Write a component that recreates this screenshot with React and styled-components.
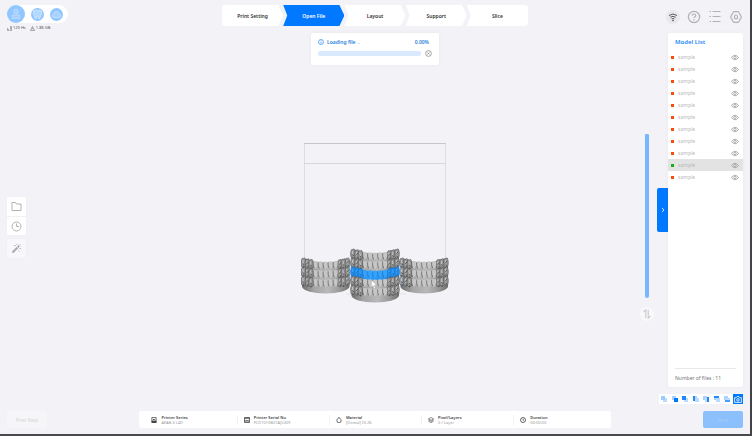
import React, { useState } from 'react';
import styled, { createGlobalStyle } from 'styled-components';

const steps = ['Print Setting', 'Open File', 'Layout', 'Support', 'Slice'];
const models = Array.from({ length: 11 }, (_, i) => ({ id: i, name: 'sample' }));
const SELECTED = 9;

const printInfo = [
    { icon: 'printer', label: 'Printer Series', value: 'AFAB-S L4D' },
    { icon: 'serial', label: 'Printer Serial No', value: 'FCD1015B01AJL009' },
    { icon: 'drop', label: 'Material', value: '[Dental] DL26' },
    { icon: 'layers', label: 'Pixel/Layers', value: '0 / Layer' },
    { icon: 'clock', label: 'Duration', value: '00:00:00' },
];

// which part of the cube is highlighted for each camera preset
const views = [
    { name: 'Perspective', x: 0, y: 0, w: 4, h: 4, fill: '#9ccbff' },
    { name: 'Front', x: 2, y: 2, w: 4, h: 4, fill: '#0078ff' },
    { name: 'Back', x: 0, y: 0, w: 4, h: 4, fill: '#2389fb' },
    { name: 'Left', x: 0, y: 0, w: 2, h: 5, fill: '#2389fb' },
    { name: 'Right', x: 4, y: 1, w: 2, h: 5, fill: '#2389fb' },
    { name: 'Top', x: 0, y: 0, w: 5, h: 2, fill: '#2389fb' },
    { name: 'Bottom', x: 1, y: 4, w: 5, h: 2, fill: '#4a9dfb' },
];

const Eye = () => (
    <svg width="8" height="7" viewBox="0 0 8 7" fill="none" stroke="#9d9da1" strokeWidth=".8">
        <path d="M.4 3.500Q4-1 7.600 3.500Q4 8 .4 3.500Z" />
        <circle cx="4" cy="3.500" r="1.200" />
    </svg>
)

const InfoIcon = ({ type }) => (
    <svg width="6" height="6" viewBox="0 0 6 6" fill="none" stroke="#444" strokeWidth=".8">
        {type === 'printer' && <><path d="M.9.4h4.200v5.200H.9z" /><path d="M1 4h4v1.500H1zM2 2l1 1 1-1" fill="#444" /></>}
        {type === 'serial' && <><path d="M.5.500h5v5h-5zM.5 1.300h5" /><path d="M1.800 5V3.200L3 4l1.200-.8V5" /></>}
        {type === 'drop' && <path d="M3 .4C4.600 1.700 5.200 2.700 5.100 3.700a2.100 2.100 0 0 1-4.200 0C.8 2.700 1.400 1.700 3 .4Z" />}
        {type === 'layers' && <path d="m3 .5 2.600 1.400L3 3.300.4 1.900ZM.4 3 3 4.400 5.600 3M.4 4.200 3 5.600l2.600-1.400" strokeWidth=".6" />}
        {type === 'clock' && <><circle cx="3" cy="3" r="2.500" /><path d="M3 1.700V3l.8.6" /></>}
    </svg>
)

// one dental arch seen from the front: molars crowd at both ends, incisors dip in the middle
const Arch = ({ x, y, selected }) => {
    const base = selected ? 'url(#blueArch)' : 'url(#greyArch)';
    const light = selected ? '#36a2fa' : '#c6c6c6';
    const mid = selected ? '#2690ee' : '#969696';
    const dark = selected ? '#1673c8' : '#565656';
    const dip = (v) => 3 * (1 - ((v - 24) / 24) ** 2);
    const incisors = [14, 19, 24, 29, 34];
    const molars = [2, 6, 9.5, 38.5, 42, 46];
    return (
        <g transform={`translate(${x} ${y})`}>
            <path d="M.5 4Q3 0 8 3Q24 8 40 3Q45 0 48 4L48 12Q44 18 24 18.500Q4 18 .5 12Z" fill={base} />
            {molars.map((m, i) => (
                <g key={m} transform={`translate(${m} ${dip(m)})`}>
                    <path d="M-2 9Q-3 4-1.700 1.500Q-1 0-.2 1.200Q.8-.8 1.700 1.300Q2.900 4.500 1.900 9Q0 11-2 9Z" fill={mid} stroke={dark} strokeWidth=".6" />
                    <path d="M-.8 2.500q1 2 .3 4" stroke={light} strokeWidth="1" fill="none" />
                    <path d={i % 2 ? 'M1 3.500-1 6M.8 7.500l-.8 2.500' : 'M-.8 6 1 7.500M0 8.500v2'} stroke={dark} strokeWidth=".9" />
                </g>
            ))}
            {incisors.map((t) => (
                <g key={t} transform={`translate(${t} ${dip(t)})`}>
                    <path d="M-2.200 2Q0 1 2.200 2Q2.600 6 1 8.500Q0 10-1 8.500Q-2.600 6-2.200 2Z" fill={light} />
                    <path d="M-2.400 2.500Q-2.700 6-1.300 8.500" stroke={dark} strokeOpacity=".75" strokeWidth=".8" fill="none" />
                </g>
            ))}
        </g>
    )
}

const Scene = () => (
    <svg width="148" height="160" viewBox="0 0 148 160" role="img" aria-label="Build volume with dental models">
        <defs>
            <linearGradient id="greyArch">
                <stop offset="0" stopColor="#6e6e6e" />
                <stop offset=".25" stopColor="#a4a4a4" />
                <stop offset=".55" stopColor="#b8b8b8" />
                <stop offset=".8" stopColor="#999" />
                <stop offset="1" stopColor="#6e6e6e" />
            </linearGradient>
            <linearGradient id="blueArch">
                <stop offset="0" stopColor="#2482d4" />
                <stop offset=".4" stopColor="#2f9dfa" />
                <stop offset="1" stopColor="#2482d4" />
            </linearGradient>
        </defs>
        <path d="M3.500 0v130M144.500 0v130" stroke="#dcdce1" />
        <path d="M3 20.500h142" stroke="#d5d5db" />
        <path d="M3 .5h142" stroke="#c6c6cc" />
        <path d="M45 151h60" stroke="#e0e0e5" />
        {[114, 123, 132].map((y) => <Arch key={y} x={.5} y={y} />)}
        {[114, 123, 132].map((y) => <Arch key={y} x={99} y={y} />)}
        <path d="M49 121v16M99 121v20" stroke="#80c2fb" strokeDasharray="2 1" />
        {[105, 114, 123, 132, 141].map((y) => <Arch key={y} x={50} y={y} selected={y === 123} />)}
        <path d="M70.500 137 75.500 142l-2.300.2 1.200 2.800-1.300.5-1.200-2.800-1.600 1.500Z" fill="#fff" stroke="#8a8a8a" strokeWidth=".3" />
    </svg>
)

const App = () => {
    const [level, setLevel] = useState(100);

    return (
        <>
        <GlobalStyle />
        <Shell>
            <Header>
                <Account>
                    <AvatarPill>
                        <Avatar $size={18} aria-label="Account">
                            <svg width="18" height="18" viewBox="0 0 18 18" fill="#a5d0ff" stroke="#c4e0ff" strokeWidth=".8">
                                <circle cx="9" cy="6.500" r="2.300" />
                                <path d="M5.300 10h7.400v3.500H5.300z" />
                            </svg>
                        </Avatar>
                        <Avatar $size={13} aria-label="Dental">
                            <svg width="13" height="13" viewBox="0 0 13 13" fill="#b4d8ff" stroke="#d5e9ff" strokeWidth=".8">
                                <path d="M2.600 3Q4.500 1.300 6.500 2.800Q8.500 1.300 10.400 3q.8 2.700-.8 4.800-.4 3.200-1.500 3.200-.7 0-.9-2.700H5.800Q5.600 11 4.900 11 3.800 11 3.400 7.800 1.800 5.700 2.600 3Z" />
                            </svg>
                        </Avatar>
                        <Avatar $size={13} aria-label="Cloud">
                            <svg width="13" height="13" viewBox="0 0 13 13" fill="#a5d0ff" stroke="#cde5ff" strokeWidth=".8">
                                <path d="M4 9.500Q2.200 9.300 2.300 7.500 2.500 6 4 5.800 4.500 3.500 6.600 3.500 8.600 3.600 9 5.700q1.700.2 1.700 1.900T9 9.500Z" />
                            </svg>
                        </Avatar>
                    </AvatarPill>
                    <Usage>
                        <span>
                            <svg width="5" height="5" viewBox="0 0 5 5" fill="none" stroke="#777" strokeWidth=".6"><path d="M.5 2v2.500h1V3M2.500 4.500h2V.5h-1v3" /></svg>
                            123 Hs
                        </span>
                        <span>
                            <svg width="5" height="5" viewBox="0 0 5 5" fill="none" stroke="#777" strokeWidth=".6"><path d="M.5 4.500h4L3.500 2.500 2.500.5l-1 2ZM1.500 2.700h2" /></svg>
                            1.86 GB
                        </span>
                    </Usage>
                </Account>

                <Steps>
                    {steps.map((s) => <Step key={s} $active={s === 'Open File'}>{s}</Step>)}
                </Steps>

                <HeaderTools>
                    <IconButton $round aria-label="Network">
                        <svg width="10" height="10" viewBox="0 0 10 10" fill="none" stroke="#48484c" strokeWidth=".9">
                            <path d="M1 3.500Q5 .5 9 3.500M2.300 5.300Q5 3.300 7.700 5.300M3.600 7Q5 5.900 6.400 7" />
                            <circle cx="5" cy="8.600" r=".4" fill="#48484c" />
                        </svg>
                    </IconButton>
                    <IconButton aria-label="Help">
                        <svg width="14" height="14" viewBox="0 0 14 14" fill="none" stroke="#b2b2b6" strokeWidth="1.200">
                            <circle cx="7" cy="7" r="5.600" />
                            <path d="M5.200 5.700Q5.300 4 7 4t1.800 1.600Q8.800 6.500 7.700 7 7 7.400 7 8.300M7 9.300v1.200" />
                        </svg>
                    </IconButton>
                    <IconButton aria-label="Menu">
                        <svg width="14" height="14" viewBox="0 0 14 14" stroke="#b2b2b6" strokeWidth="1">
                            <path d="M1.500 1.500h1.500M4.500 1.500h8M1.500 6.500h1.500M4.500 6.500h8M1.500 11.500h1.500M4.500 11.500h8" />
                        </svg>
                    </IconButton>
                    <IconButton aria-label="Settings">
                        <svg width="14" height="14" viewBox="0 0 14 14" fill="none" stroke="#b2b2b6" strokeWidth="1.200">
                            <path d="M4.300 2.200Q4.600 1.600 5.200 1.600h3.600q.6 0 .9.6L12.200 6.500q.3.5 0 1L9.700 11.800q-.3.6-.9.6H5.200q-.6 0-.9-.6L1.800 7.500q-.3-.5 0-1Z" />
                            <ellipse cx="7" cy="7" rx="1.600" ry="2" />
                        </svg>
                    </IconButton>
                </HeaderTools>
            </Header>

            <Body>
                <Rail>
                    <RailCard>
                        <RailButton aria-label="Open folder">
                            <svg width="11" height="11" viewBox="0 0 11 11" fill="none" stroke="#b2b2b6" strokeWidth="1">
                                <path d="M1 1.500h3.500l1 1.500H10v6.500H1z" strokeLinejoin="round" />
                            </svg>
                        </RailButton>
                        <RailButton aria-label="Recent files">
                            <svg width="11" height="11" viewBox="0 0 11 11" fill="none" stroke="#b2b2b6" strokeWidth="1">
                                <circle cx="5.500" cy="5.500" r="4.500" />
                                <path d="M5.500 2.500v3h2.700" />
                            </svg>
                        </RailButton>
                    </RailCard>
                    <RailCard $faded>
                        <RailButton aria-label="Auto fix">
                            <svg width="11" height="11" viewBox="0 0 11 11" fill="none" stroke="#aaaaae">
                                <path d="M1.500 9.500 6.500 4.500" strokeWidth="2" />
                                <path d="m7 4 1-1" strokeWidth="1.800" stroke="#8e8e92" />
                                <path d="M3 2.500h1.500M6 1v1M9 1.500v1M8.500 5.500h1.300M7.500 7.500l1 1" strokeWidth=".9" />
                            </svg>
                        </RailButton>
                    </RailCard>
                </Rail>

                <Stage>
                    <Toast>
                        <ToastTitle>
                            <svg width="6" height="6" viewBox="0 0 6 6" fill="none" stroke="#2b8cf0" strokeWidth=".7">
                                <circle cx="3" cy="3" r="2.500" /><path d="M3 1.400v.7M3 2.600v2" />
                            </svg>
                            <label htmlFor="loading">Loading file &nbsp;.</label>
                            <Percent>0.00%</Percent>
                        </ToastTitle>
                        <ToastRow>
                            <Bar id="loading" value="0" max="100" />
                            <Cancel aria-label="Cancel">
                                <svg width="7" height="7" viewBox="0 0 7 7" fill="none" stroke="#808084" strokeWidth=".7">
                                    <circle cx="3.500" cy="3.500" r="2.900" /><path d="m2.400 2.400 2.200 2.200M4.600 2.400 2.400 4.600" />
                                </svg>
                            </Cancel>
                        </ToastRow>
                    </Toast>
                    <Scene />
                </Stage>

                <Side>
                    <LevelColumn>
                        <Level type="range" aria-label="Slice height" value={level} onChange={(e) => setLevel(e.target.value)} />
                        <Swap aria-label="Flip range">
                            <svg width="8" height="10" viewBox="0 0 8 10" fill="none" stroke="#c9c9cd" strokeWidth="1.100">
                                <path d="M.6 3 2.800.8v8.400M5.200.8v8.400L7.400 7" />
                            </svg>
                        </Swap>
                    </LevelColumn>
                    <PanelColumn>
                        <PanelRow>
                            <Collapse aria-label="Collapse model list">
                                <svg width="4" height="6" viewBox="0 0 4 6" fill="none" stroke="#fff" strokeWidth=".8"><path d="m1 1 2 2-2 2" /></svg>
                            </Collapse>
                            <Panel>
                                <PanelTitle>Model List</PanelTitle>
                                <ModelList>
                                    {models.map((m) => (
                                        <ModelRow key={m.id} $selected={m.id === SELECTED}>
                                            <Dot $selected={m.id === SELECTED} />
                                            <ModelName>{m.name}</ModelName>
                                            <EyeButton aria-label={`Show ${m.name}`}><Eye /></EyeButton>
                                        </ModelRow>
                                    ))}
                                </ModelList>
                                <PanelFoot>Number of files : {models.length}</PanelFoot>
                            </Panel>
                        </PanelRow>
                        <ViewBar>
                            {views.map((v) => (
                                <ViewButton key={v.name} aria-label={v.name}>
                                    <svg width="6" height="6" viewBox="0 0 6 6">
                                        <path d="M0 0h4v4H0z" fill="#a9d2ff" />
                                        <path d="M2 2h4v4H2z" fill="#b9dbff" />
                                        <rect x={v.x} y={v.y} width={v.w} height={v.h} fill={v.fill} />
                                    </svg>
                                </ViewButton>
                            ))}
                            <ViewButton $active aria-label="Screenshot">
                                <svg width="8" height="7" viewBox="0 0 8 7" fill="none" stroke="#fff" strokeWidth=".8">
                                    <path d="M.6 1.700h1.700L3 .6h2l.7 1.100h1.700v4.700H.6z" /><circle cx="4" cy="3.900" r="1.300" />
                                </svg>
                            </ViewButton>
                        </ViewBar>
                    </PanelColumn>
                </Side>
            </Body>

            <Footer>
                <FooterButton>Prev Step</FooterButton>
                <InfoBar>
                    {printInfo.map((p) => (
                        <InfoItem key={p.label}>
                            <InfoIcon type={p.icon} />
                            <div>
                                <InfoLabel>{p.label}</InfoLabel>
                                <InfoValue>{p.value}</InfoValue>
                            </div>
                        </InfoItem>
                    ))}
                </InfoBar>
                <FooterButton $primary>Next</FooterButton>
            </Footer>
        </Shell>
        </>
    )
}

const GlobalStyle = createGlobalStyle`
  * { box-sizing: border-box; }
  body {
    margin: 0;
    background: #f2f2f7;
    font-family: "Noto Sans", "Open Sans", sans-serif;
    font-size: 5px;
    line-height: 6px;
    color: #333;
  }
  button {
    display: flex;
    align-items: center;
    justify-content: center;
    padding: 0;
    border: 0;
    background: none;
    font: inherit;
    color: inherit;
  }
  svg { display: block; flex: none; }
`

const Shell = styled.div`
  min-height: 100vh;
  display: flex;
  flex-direction: column;
  padding: 5px 7px 6px;
  border-right: 2px solid #444446;
  border-bottom: 2px solid #4a4a4a;
`

const Header = styled.header`
  display: grid;
  grid-template-columns: 1fr auto 1fr;
  align-items: start;
  height: 28px;
`

const Account = styled.div`
  display: flex;
  flex-direction: column;
  align-items: flex-start;
  gap: 2px;
`

const AvatarPill = styled.div`
  display: flex;
  align-items: center;
  gap: 6px;
  padding-right: 5px;
  border-radius: 9px;
  background: #fff;
`

const Avatar = styled.button`
  width: ${(p) => p.$size}px;
  height: ${(p) => p.$size}px;
  border-radius: 50%;
  background: #92c6ff;
`

const Usage = styled.div`
  display: flex;
  gap: 4px;
  font-size: 4px;
  color: #555;

  span {
    display: flex;
    align-items: center;
    gap: 1px;
  }
`

const Steps = styled.nav`
  display: flex;
  width: 306px;
  border-radius: 3px;
  overflow: hidden;
`

const Step = styled.button`
  flex: 1;
  height: 21px;
  font-size: 5px;
  font-weight: 600;
  color: ${(p) => (p.$active ? '#fff' : '#333')};
  background: ${(p) => (p.$active ? '#0078ff' : '#fff')};
  clip-path: polygon(0 0, calc(100% - 5px) 0, 100% 50%, calc(100% - 5px) 100%, 0 100%, 4px 50%);

  &:first-child {
    clip-path: polygon(0 0, calc(100% - 5px) 0, 100% 50%, calc(100% - 5px) 100%, 0 100%);
  }
  &:last-child {
    clip-path: polygon(0 0, 100% 0, 100% 100%, 0 100%, 4px 50%);
  }
`

const HeaderTools = styled.div`
  display: flex;
  justify-content: flex-end;
  gap: 7px;
  padding-top: 5px;
`

const IconButton = styled.button`
  width: 14px;
  height: 14px;
  border-radius: 50%;
  background: ${(p) => (p.$round ? '#e9e9ed' : 'none')};
`

const Body = styled.main`
  flex: 1;
  display: grid;
  grid-template-columns: 1fr auto 1fr;
`

const Rail = styled.div`
  display: flex;
  flex-direction: column;
  justify-content: center;
  align-items: flex-start;
  gap: 4px;
  padding-top: 18px;
`

const RailCard = styled.div`
  width: 19px;
  border-radius: 2px;
  background: ${(p) => (p.$faded ? '#f8f8fb' : '#fff')};
  box-shadow: 0 0 3px rgba(0, 0, 0, 0.03);
`

const RailButton = styled.button`
  width: 100%;
  height: 19px;

  & + & {
    border-top: 1px solid #f1f1f3;
  }
`

const Stage = styled.section`
  display: flex;
  flex-direction: column;
  align-items: center;
  gap: 78px;
`

const Toast = styled.div`
  width: 128px;
  height: 32px;
  padding: 6px 7px;
  border-radius: 2px;
  background: #fff;
  box-shadow: 0 0 4px rgba(0, 0, 0, 0.05);
`

const ToastTitle = styled.div`
  display: flex;
  align-items: center;
  gap: 3px;
  font-weight: 600;
  color: #2b83dc;
`

const Percent = styled.span`
  margin-left: auto;
  padding-right: 3px;
`

const ToastRow = styled.div`
  display: flex;
  align-items: center;
  gap: 4px;
  margin-top: 5px;
`

const Bar = styled.progress`
  appearance: none;
  flex: 1;
  min-width: 0;
  height: 5px;
  border: 0;
  border-radius: 2px;
  overflow: hidden;
  background: #d9eaff;

  &::-webkit-progress-bar { background: #d9eaff; }
  &::-webkit-progress-value { background: #0078ff; }
`

const Cancel = styled.button`
  width: 7px;
  height: 7px;
`

const Side = styled.div`
  display: flex;
  justify-content: flex-end;
  gap: 3px;
`

const LevelColumn = styled.div`
  display: flex;
  flex-direction: column;
  align-items: center;
  justify-content: center;
  gap: 9px;
  width: 14px;
  padding-top: 18px;
`

const Level = styled.input`
  appearance: none;
  writing-mode: vertical-lr;
  direction: rtl;
  width: 4px;
  height: 164px;
  margin: 0;
  border-radius: 2px;
  background: #75b6ff;

  &::-webkit-slider-thumb {
    appearance: none;
    width: 4px;
    height: 4px;
    border-radius: 2px;
    background: #75b6ff;
  }
`

const Swap = styled.button`
  width: 14px;
  height: 14px;
  border-radius: 50%;
  background: #f9f9fb;
`

const PanelColumn = styled.div`
  display: flex;
  flex-direction: column;
  align-items: flex-end;
  gap: 7px;
`

const PanelRow = styled.div`
  flex: 1;
  display: flex;
  align-items: center;
`

const Collapse = styled.button`
  width: 11px;
  height: 44px;
  border-radius: 2px 0 0 2px;
  background: #0078ff;
`

const Panel = styled.aside`
  align-self: stretch;
  display: flex;
  flex-direction: column;
  width: 75px;
  border-radius: 2px;
  background: #fff;
  box-shadow: 0 0 4px rgba(0, 0, 0, 0.04);
`

const PanelTitle = styled.h2`
  margin: 0;
  padding: 4px 7px;
  font-size: 6px;
  line-height: 10px;
  font-weight: 600;
  color: #2389f5;
`

const ModelList = styled.ul`
  flex: 1;
  margin: 0;
  padding: 0;
  list-style: none;
`

const ModelRow = styled.li`
  display: flex;
  align-items: center;
  height: 12px;
  padding: 0 4px 0 3px;
  background: ${(p) => (p.$selected ? '#e3e3e3' : 'none')};
`

const Dot = styled.span`
  width: 3px;
  height: 3px;
  margin-right: 4px;
  background: ${(p) => (p.$selected ? '#12b012' : '#ff4a0a')};
`

const ModelName = styled.span`
  flex: 1;
  color: #b9b9bd;
`

const EyeButton = styled.button`
  width: 8px;
  height: 8px;
`

const PanelFoot = styled.p`
  margin: 0 7px;
  padding: 6px 0;
  border-top: 1px solid #e9e9ec;
  color: #77777a;
`

const ViewBar = styled.div`
  display: flex;
  width: 84px;
  height: 10px;
  background: #fff;
`

const ViewButton = styled.button`
  flex: 1;
  background: ${(p) => (p.$active ? '#0078ff' : 'none')};
`

const Footer = styled.footer`
  display: flex;
  align-items: stretch;
  justify-content: space-between;
  height: 17px;
  margin-top: 7px;
`

const FooterButton = styled.button`
  width: 40px;
  border-radius: 2px;
  color: ${(p) => (p.$primary ? '#a3ccfb' : '#d3d3d7')};
  background: ${(p) => (p.$primary ? '#8cc0fd' : '#f6f6f9')};
`

const InfoBar = styled.div`
  display: flex;
  align-items: center;
  width: 64%;
  padding: 0 5px 0 6px;
  border-radius: 2px;
  background: #fff;
`

const InfoItem = styled.div`
  flex: 1;
  display: flex;
  align-items: center;
  gap: 4px;
  padding-left: 6px;
  font-size: 4px;
  line-height: 5px;
  white-space: nowrap;

  & + & {
    border-left: 1px solid #f1f1f4;
  }
`

const InfoLabel = styled.div`
  font-weight: 600;
  color: #444;
`

const InfoValue = styled.div`
  color: #9a9a9e;
`

export default App;
